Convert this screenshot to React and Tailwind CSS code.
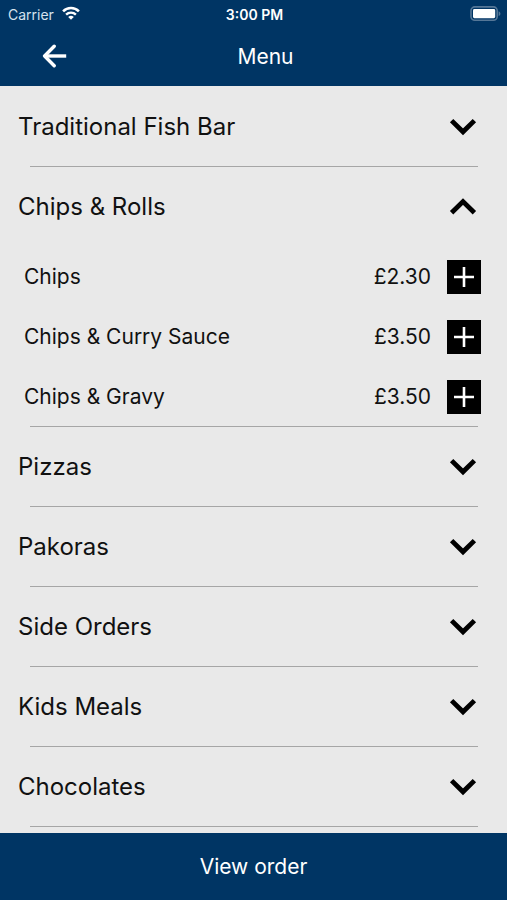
import React, { useState } from 'react'

const sections = [
  { title: 'Traditional Fish Bar', items: [] },
  {
    title: 'Chips & Rolls',
    items: [
      { name: 'Chips', price: '£2.30' },
      { name: 'Chips & Curry Sauce', price: '£3.50' },
      { name: 'Chips & Gravy', price: '£3.50' },
    ],
  },
  { title: 'Pizzas', items: [] },
  { title: 'Pakoras', items: [] },
  { title: 'Side Orders', items: [] },
  { title: 'Kids Meals', items: [] },
  { title: 'Chocolates', items: [] },
]

function WifiIcon() {
  return (
    <svg width="18" height="16" viewBox="0 0 18 16" fill="none" stroke="currentColor" aria-hidden="true">
      <path d="M1.1 5.3a11.2 11.2 0 0 1 15.8 0" strokeWidth="2.6" />
      <path d="M4.1 8.6a7 7 0 0 1 9.8 0" strokeWidth="2.4" />
      <path d="M9 13.8L6.2 11.1a4 4 0 0 1 5.6 0z" fill="currentColor" stroke="none" />
    </svg>
  )
}

function BatteryIcon() {
  return (
    <svg width="31" height="17" viewBox="0 0 31 17" aria-hidden="true">
      <rect x="1" y="0.9" width="26.2" height="13.4" rx="3.8" fill="none" stroke="#557797" strokeWidth="1.6" />
      <rect x="3" y="3" width="22.2" height="9.2" rx="1.4" fill="#fff" />
      <path d="M28.6 5.2c2.4.8 2.4 4 0 4.8z" fill="#557797" />
    </svg>
  )
}

function BackIcon() {
  return (
    <svg
      width="26"
      height="24"
      viewBox="0 0 26 24"
      fill="none"
      stroke="currentColor"
      strokeWidth="3.4"
      strokeLinecap="round"
      strokeLinejoin="round"
      aria-hidden="true"
    >
      <path d="M12.2 2.2L2.6 12l9.6 9.8" />
      <path d="M2.6 12h21.6" strokeLinecap="butt" />
    </svg>
  )
}

function Chevron({ up }) {
  return (
    <svg width="28" height="18" viewBox="0 0 28 18" fill="none" stroke="#000" strokeWidth="4.8" aria-hidden="true">
      <path d={up ? 'M2.6 14.8L14 3.6l11.4 11.2' : 'M2.6 2.6L14 13.8l11.4-11.2'} />
    </svg>
  )
}

function PlusIcon() {
  return (
    <svg width="20" height="20" viewBox="0 0 20 20" stroke="currentColor" strokeWidth="2.6" aria-hidden="true">
      <path d="M10 0v20M0 10h20" />
    </svg>
  )
}

function Section({ section, open, onToggle }) {
  return (
    <section>
      <h2>
        <button
          type="button"
          aria-expanded={open}
          onClick={onToggle}
          className="flex h-20 w-full items-center justify-between pl-[18px] pr-[30px] text-left text-[24px]"
        >
          {section.title}
          <Chevron up={open} />
        </button>
      </h2>
      {open && (
        <ul>
          {section.items.map((item) => (
            <li key={item.name} className="flex h-15 items-center pb-px pl-6 pr-[26px] text-[21px]">
              <span className="flex-1">{item.name}</span>
              <span>{item.price}</span>
              <button
                type="button"
                aria-label={`Add ${item.name}`}
                className="ml-4 flex size-[34px] items-center justify-center bg-black text-white"
              >
                <PlusIcon />
              </button>
            </li>
          ))}
        </ul>
      )}
      <hr className="-mt-px ml-[30px] mr-[29px] border-[#a6a6a6]" />
    </section>
  )
}

export default function App() {
  const [openTitle, setOpenTitle] = useState('Chips & Rolls')

  return (
    <div className="flex h-dvh flex-col bg-[#e9e9e9] font-['Inter',sans-serif] text-[#111]">
      <header className="bg-[#003564] text-white">
        <div className="grid h-7 grid-cols-3 items-center pl-2 pr-[6px] text-[14px]">
          <div className="flex items-center gap-2 text-[#d5e2ee]">
            Carrier
            <span className="text-white">
              <WifiIcon />
            </span>
          </div>
          <time className="text-center font-semibold">3:00 PM</time>
          <div className="flex justify-end">
            <BatteryIcon />
          </div>
        </div>
        <div className="flex h-[58px] items-center pr-12">
          <button type="button" aria-label="Back" className="flex w-18 justify-end pb-0.5 pr-1">
            <BackIcon />
          </button>
          <h1 className="flex-1 text-center text-[21px]">Menu</h1>
        </div>
      </header>
      <main className="min-h-0 flex-1 overflow-y-auto pt-px">
        {sections.map((s) => (
          <Section
            key={s.title}
            section={s}
            open={s.title === openTitle}
            onToggle={() => setOpenTitle(s.title === openTitle ? null : s.title)}
          />
        ))}
      </main>
      <button type="button" className="h-[67px] shrink-0 bg-[#003564] text-[21px] text-white">
        View order
      </button>
    </div>
  )
}
